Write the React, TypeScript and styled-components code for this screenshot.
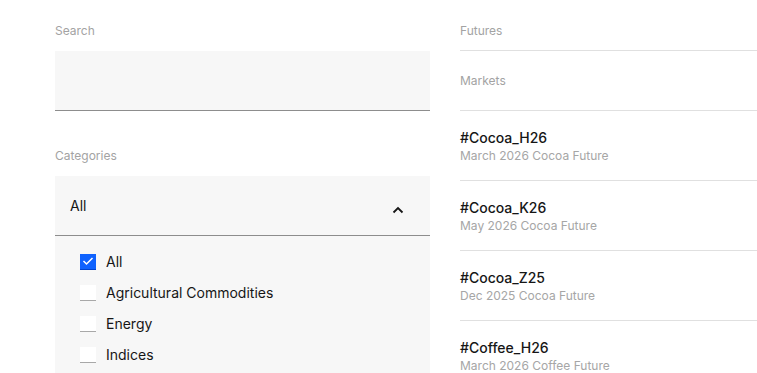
import React from 'react';
import styled, { createGlobalStyle } from 'styled-components';

const GlobalStyle = createGlobalStyle`
  body {
    margin: 0;
    background: #ffffff;
    font-family: Inter, 'Noto Sans', sans-serif;
    color: #161616;
  }
`;

const Page = styled.div`
  display: grid;
  grid-template-columns: 375px 297px;
  column-gap: 30px;
  padding: 23px 0 0 55px;
  height: 373px;
  box-sizing: border-box;
  overflow: hidden;
`;

const Column = styled.div`
  display: flex;
  flex-direction: column;
`;

const FieldLabel = styled.div<{ $top?: number }>`
  font-size: 12px;
  line-height: 16px;
  color: #a3a3a3;
  margin-top: ${(p) => p.$top ?? 0}px;
  margin-bottom: 12px;
`;

const SearchInput = styled.input`
  height: 60px;
  box-sizing: border-box;
  border: none;
  border-bottom: 1px solid #8d8d8d;
  background: #f7f7f7;
  outline: none;
  padding: 0 15px;
  font: inherit;
  font-size: 14px;
`;

const Dropdown = styled.div`
  background: #f7f7f7;
`;

const DropdownHeader = styled.div`
  height: 60px;
  box-sizing: border-box;
  border-bottom: 1px solid #8d8d8d;
  display: flex;
  align-items: center;
  justify-content: space-between;
  padding: 0 26px 0 15px;
  font-size: 14px;
  svg {
    margin-top: 8px;
  }
`;

const Options = styled.ul`
  list-style: none;
  margin: 0;
  padding: 10px 0 12px 25px;
`;

const Option = styled.li`
  height: 31px;
  display: flex;
  align-items: center;
  gap: 10px;
  font-size: 14px;
  color: #161616;
`;

const Box = styled.span<{ $checked: boolean }>`
  width: 16px;
  height: 16px;
  box-sizing: border-box;
  display: flex;
  align-items: center;
  justify-content: center;
  background: ${(p) => (p.$checked ? '#0f62fe' : '#ffffff')};
  border-bottom: 1px solid ${(p) => (p.$checked ? '#0043ce' : '#a8a8a8')};
`;

const SectionLabel = styled.div<{ $top: number; $bottom: number }>`
  font-size: 12px;
  line-height: 16px;
  color: #a3a3a3;
  padding: ${(p) => p.$top}px 0 ${(p) => p.$bottom}px;
  border-bottom: 1px solid #e0e0e0;
`;

const Market = styled.div`
  padding: 18px 0 16px;
  border-bottom: 1px solid #e0e0e0;
`;

const Ticker = styled.div`
  font-size: 14px;
  line-height: 18px;
  font-weight: 500;
  color: #161616;
  margin-bottom: 1px;
`;

const Desc = styled.div`
  font-size: 12px;
  line-height: 16px;
  color: #a6a6a6;
`;

const categories = [
  { name: 'All', checked: true },
  { name: 'Agricultural Commodities', checked: false },
  { name: 'Energy', checked: false },
  { name: 'Indices', checked: false },
];

const markets = [
  { ticker: '#Cocoa_H26', desc: 'March 2026 Cocoa Future' },
  { ticker: '#Cocoa_K26', desc: 'May 2026 Cocoa Future' },
  { ticker: '#Cocoa_Z25', desc: 'Dec 2025 Cocoa Future' },
  { ticker: '#Coffee_H26', desc: 'March 2026 Coffee Future' },
];

const ChevronUp = () => (
  <svg width="12" height="8" viewBox="0 0 12 8">
    <polyline points="1.5,6.5 6,2 10.5,6.5" fill="none" stroke="#161616" strokeWidth="1.8" />
  </svg>
);

const Check = () => (
  <svg width="12" height="10" viewBox="0 0 12 10">
    <polyline points="1.5,5 4.5,8 10.5,2" fill="none" stroke="#ffffff" strokeWidth="1.5" />
  </svg>
);

export default function App() {
  return (
    <>
      <GlobalStyle />
      <Page>
        <Column>
          <FieldLabel>Search</FieldLabel>
          <SearchInput />
          <FieldLabel $top={37}>Categories</FieldLabel>
          <Dropdown>
            <DropdownHeader>
              <span>All</span>
              <ChevronUp />
            </DropdownHeader>
            <Options>
              {categories.map((c) => (
                <Option key={c.name}>
                  <Box $checked={c.checked}>{c.checked && <Check />}</Box>
                  {c.name}
                </Option>
              ))}
            </Options>
          </Dropdown>
        </Column>
        <Column>
          <SectionLabel $top={0} $bottom={11}>Futures</SectionLabel>
          <SectionLabel $top={22} $bottom={21}>Markets</SectionLabel>
          {markets.map((m) => (
            <Market key={m.ticker}>
              <Ticker>{m.ticker}</Ticker>
              <Desc>{m.desc}</Desc>
            </Market>
          ))}
        </Column>
      </Page>
    </>
  );
}
